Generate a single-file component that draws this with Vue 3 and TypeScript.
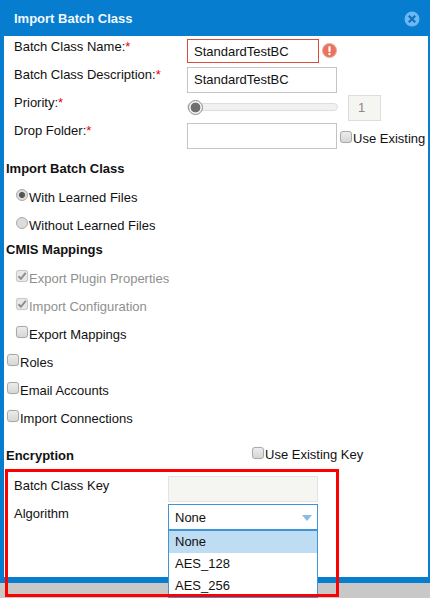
<script setup lang="ts">
interface Option {
  label: string
  indent?: boolean
  type?: 'radio' | 'check'
  checked?: boolean
  disabled?: boolean
}

const learned: Option[] = [
  { label: 'With Learned Files', indent: true, type: 'radio', checked: true },
  { label: 'Without Learned Files', indent: true, type: 'radio' }
]

const mappings: Option[] = [
  { label: 'Export Plugin Properties', indent: true, checked: true, disabled: true },
  { label: 'Import Configuration', indent: true, checked: true, disabled: true },
  { label: 'Export Mappings', indent: true },
  { label: 'Roles' },
  { label: 'Email Accounts' },
  { label: 'Import Connections' }
]

const algorithms = ['None', 'AES_128', 'AES_256']
</script>

<template>
  <div class="page">
    <div class="dialog">
      <header class="head">
        <span class="title">Import Batch Class</span>
        <svg class="close" width="16" height="16" viewBox="0 0 16 16">
          <circle cx="8" cy="8" r="7.5" fill="#6cb8f5" />
          <path d="M4.8 4.8l6.4 6.4M11.2 4.8l-6.4 6.4" stroke="#0f6fb8" stroke-width="2.2" />
        </svg>
      </header>

      <div class="body">
        <div class="form-row row-name">
          <label class="lbl">Batch Class Name:<em>*</em></label>
          <div class="text-input invalid">StandardTestBC</div>
          <svg class="warn" width="15" height="15" viewBox="0 0 15 15">
            <circle cx="7.5" cy="7.5" r="7" fill="#e8735f" stroke="#f0a898" />
            <rect x="6.4" y="3" width="2.2" height="6" rx="1" fill="#fff" />
            <circle cx="7.5" cy="11" r="1.2" fill="#fff" />
          </svg>
        </div>
        <div class="form-row row-desc">
          <label class="lbl">Batch Class Description:<em>*</em></label>
          <div class="text-input">StandardTestBC</div>
        </div>
        <div class="form-row row-prio">
          <label class="lbl">Priority:<em>*</em></label>
          <div class="slider"><span class="thumb"></span></div>
          <div class="num">1</div>
        </div>
        <div class="form-row row-drop">
          <label class="lbl">Drop Folder:<em>*</em></label>
          <div class="text-input"></div>
          <span class="opt-inline"><span class="box"></span>Use Existing</span>
        </div>

        <h4 class="sec sec-first">Import Batch Class</h4>
        <div
          v-for="o in learned"
          :key="o.label"
          class="opt indent"
        >
          <span class="radio" :class="{ on: o.checked }"></span>{{ o.label }}
        </div>

        <h4 class="sec sec-cmis">CMIS Mappings</h4>
        <div
          v-for="o in mappings"
          :key="o.label"
          class="opt"
          :class="{ indent: o.indent, off: o.disabled }"
        >
          <span class="box" :class="{ ticked: o.checked }">
            <svg v-if="o.checked" width="10" height="10" viewBox="0 0 10 10">
              <path d="M1.5 5.2l2.4 2.6 4.8-6" fill="none" stroke="#8f8f8f" stroke-width="2" />
            </svg>
          </span>{{ o.label }}
        </div>

        <div class="enc-head">
          <h4 class="sec enc-title">Encryption</h4>
          <span class="opt-inline enc-key"><span class="box"></span>Use Existing Key</span>
        </div>

        <div class="form-row row-key">
          <label class="lbl lbl-enc">Batch Class Key</label>
          <div class="key-input"></div>
        </div>
        <div class="form-row row-algo">
          <label class="lbl lbl-enc">Algorithm</label>
          <div class="select">
            <div class="select-value">None<span class="caret"></span></div>
            <ul class="select-list">
              <li v-for="(a, i) in algorithms" :key="a" :class="{ active: i === 0 }">{{ a }}</li>
            </ul>
          </div>
        </div>
      </div>
    </div>
    <div class="highlight"></div>
  </div>
</template>

<style>
html,
body {
  margin: 0;
  background: #c8c8c8;
}
</style>

<style scoped>
.page {
  position: relative;
  width: 430px;
  height: 598px;
  overflow: hidden;
  font-family: "Liberation Sans", Arial, sans-serif;
  font-size: 13px;
  color: #111;
  background: #c8c8c8;
}

.dialog {
  box-sizing: border-box;
  width: 430px;
  height: 583px;
  background: #067dcf;
  padding: 0 2px 6px 4px;
  display: flex;
  flex-direction: column;
}

.head {
  height: 36px;
  flex: none;
  display: flex;
  align-items: center;
  justify-content: space-between;
  padding: 0 8px 0 10px;
  color: #f2f8fd;
}

.title {
  font-size: 13px;
  font-weight: 700;
}

.close {
  margin-top: 1px;
}

.body {
  flex: 1;
  background: #fff;
  padding-left: 2px;
}

.form-row {
  display: flex;
  align-items: flex-start;
  position: relative;
}

.lbl {
  width: 181px;
  flex: none;
  padding-left: 8px;
  box-sizing: border-box;
  line-height: 15px;
}

.lbl em {
  color: #e00;
  font-style: normal;
}

.text-input {
  box-sizing: border-box;
  width: 150px;
  height: 26px;
  border: 1px solid #c4c4c4;
  padding-left: 6px;
  line-height: 24px;
  background: #fff;
}

.text-input.invalid {
  width: 132px;
  height: 24px;
  border-color: #dd4b39;
  line-height: 23px;
}

.warn {
  margin: 4px 0 0 3px;
}

.row-name {
  height: 28px;
  padding-top: 3px;
}

.row-desc {
  height: 28px;
}

.row-prio {
  height: 28px;
}

.slider {
  position: relative;
  box-sizing: border-box;
  width: 151px;
  height: 8px;
  margin-top: 8px;
  background: #f1f1f1;
  border: 1px solid #dedede;
  border-radius: 4px;
}

.thumb {
  position: absolute;
  left: 0;
  top: -4px;
  box-sizing: border-box;
  width: 15px;
  height: 15px;
  border-radius: 50%;
  border: 1px solid #8c8c8c;
  background: radial-gradient(circle, #6f6f6f 0 4.6px, #f1f1f1 5.2px);
}

.num {
  box-sizing: border-box;
  width: 33px;
  height: 26px;
  margin-left: 10px;
  border: 1px solid #ddd;
  background: #f5f5f2;
  color: #8a8a8a;
  padding-left: 9px;
  line-height: 24px;
}

.row-drop {
  height: 38px;
}

.opt-inline {
  display: inline-flex;
  align-items: center;
  margin: 8px 0 0 3px;
  height: 15px;
  line-height: 15px;
  white-space: nowrap;
}

.box {
  box-sizing: border-box;
  width: 12px;
  height: 12px;
  flex: none;
  display: inline-flex;
  align-items: center;
  justify-content: center;
  border: 1px solid #a9a9a9;
  border-radius: 3px;
  background: linear-gradient(#ececec, #d6d6d6);
  margin: -4px 1px 0 0;
  box-shadow: 0 0 1px #ccc;
}

.box.ticked {
  border-color: #c9c9c9;
  background: #e8e8e8;
}

.radio {
  box-sizing: border-box;
  width: 12px;
  height: 12px;
  flex: none;
  border: 1px solid #a9a9a9;
  border-radius: 50%;
  background: #dcdcdc;
  margin: -4px 1px 0 0;
}

.radio.on {
  background: radial-gradient(circle, #555 0 2.6px, #dcdcdc 3.4px);
}

.sec {
  margin: 0;
  font-size: 13px;
  font-weight: 700;
  line-height: 15px;
}

.sec-first {
  height: 22px;
}

.sec-cmis {
  height: 22px;
  margin-top: 3px;
}

.opt {
  height: 28px;
  display: flex;
  align-items: center;
  padding-left: 1px;
  line-height: 15px;
}

.opt.indent {
  padding-left: 10px;
}

.opt.off {
  color: #8f8f8f;
}

.enc-head {
  display: flex;
  align-items: flex-start;
  height: 28px;
  margin-top: 15px;
}

.enc-title {
  width: 246px;
  flex: none;
  padding-top: 1px;
}

.enc-key {
  margin: 0;
}

.row-key {
  height: 28px;
  margin-top: 1px;
}

.lbl-enc {
  width: 162px;
  padding-top: 2px;
}

.key-input {
  box-sizing: border-box;
  width: 150px;
  height: 26px;
  background: #f5f5f2;
  border: 1px solid #e4e4e4;
}

.select {
  position: relative;
  width: 150px;
}

.select-value {
  position: relative;
  box-sizing: border-box;
  height: 26px;
  border: 1px solid #3f93d6;
  padding-left: 6px;
  line-height: 26px;
}

.caret {
  position: absolute;
  right: 5px;
  top: 10px;
  width: 0;
  height: 0;
  border-left: 5px solid transparent;
  border-right: 5px solid transparent;
  border-top: 6px solid #86bde6;
}

.select-list {
  position: absolute;
  left: 0;
  right: 0;
  top: 26px;
  box-sizing: border-box;
  margin: 0;
  padding: 0;
  list-style: none;
  background: #fff;
  border: 1px solid #3f93d6;
}

.select-list li {
  height: 22px;
  line-height: 22px;
  padding-left: 6px;
}

.select-list li.active {
  background: #bedcf2;
}

.highlight {
  position: absolute;
  left: 5px;
  top: 469px;
  box-sizing: border-box;
  width: 334px;
  height: 128px;
  border: 3px solid #f00;
  pointer-events: none;
}
</style>
